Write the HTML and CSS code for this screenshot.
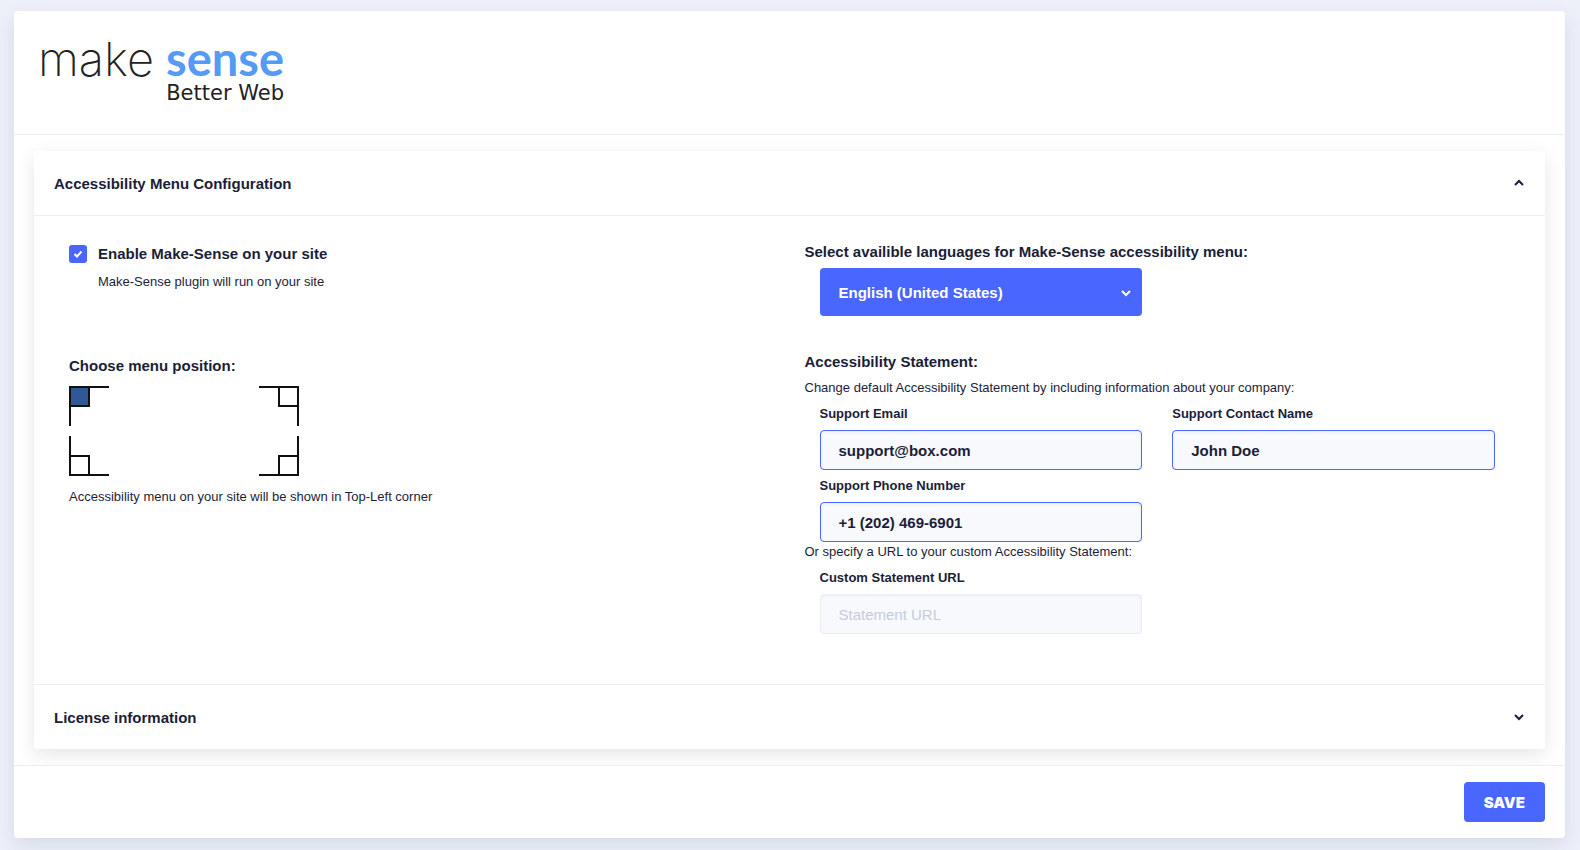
FILE: index.html
```html
<!DOCTYPE html>
<html lang="en">

<head>
  <meta charset="UTF-8">
  <meta name="viewport" content="width=device-width, initial-scale=1.0">
  <title>Make-Sense settings</title>
  <link rel="stylesheet" href="styles.css">
</head>

<body>
  <form class="card">
    <header class="card-header">
      <div class="logo">
        <div class="logo-name"><span class="logo-make">make</span> <span class="logo-sense">sense</span></div>
        <div class="logo-sub">Better Web</div>
      </div>
    </header>

    <main class="card-body">
      <div class="accordion">
        <button type="button" class="accordion-toggle" aria-expanded="true">
          Accessibility Menu Configuration
          <svg class="chevron" viewBox="0 0 12 12"><path d="M2 8l4-4 4 4" /></svg>
        </button>

        <div class="accordion-body">
          <div class="column">
            <section class="enable">
              <input type="checkbox" id="enable" class="checkbox" checked>
              <div>
                <label for="enable" class="title">Enable Make-Sense on your site</label>
                <p class="text">Make-Sense plugin will run on your site</p>
              </div>
            </section>

            <section>
              <h2 class="title">Choose menu position:</h2>
              <div class="positions">
                <input type="radio" name="position" class="corner top left" aria-label="Top-Left" checked>
                <input type="radio" name="position" class="corner top right" aria-label="Top-Right">
                <input type="radio" name="position" class="corner bottom left" aria-label="Bottom-Left">
                <input type="radio" name="position" class="corner bottom right" aria-label="Bottom-Right">
              </div>
              <p class="text">Accessibility menu on your site will be shown in Top-Left corner</p>
            </section>
          </div>

          <div class="column">
            <section class="languages">
              <label for="language" class="title">Select availible languages for Make-Sense accessibility menu:</label>
              <div class="fields">
                <div class="select-wrap">
                  <select id="language" class="select">
                    <option>English (United States)</option>
                  </select>
                  <svg class="chevron" viewBox="0 0 12 12"><path d="M2 4l4 4 4-4" /></svg>
                </div>
              </div>
            </section>

            <section>
              <h2 class="title">Accessibility Statement:</h2>
              <p class="text intro">Change default Accessibility Statement by including information about your company:</p>
              <div class="fields">
                <div class="field">
                  <label for="email">Support Email</label>
                  <input type="text" id="email" value="support@box.com">
                </div>
                <div class="field">
                  <label for="contact">Support Contact Name</label>
                  <input type="text" id="contact" value="John Doe">
                </div>
                <div class="field">
                  <label for="phone">Support Phone Number</label>
                  <input type="text" id="phone" value="+1 (202) 469-6901">
                </div>
              </div>
              <p class="text intro">Or specify a URL to your custom Accessibility Statement:</p>
              <div class="fields">
                <div class="field">
                  <label for="url">Custom Statement URL</label>
                  <input type="text" id="url" placeholder="Statement URL">
                </div>
              </div>
            </section>
          </div>
        </div>

        <button type="button" class="accordion-toggle" aria-expanded="false">
          License information
          <svg class="chevron" viewBox="0 0 12 12"><path d="M2 4l4 4 4-4" /></svg>
        </button>
      </div>
    </main>

    <footer class="card-footer">
      <button type="submit" class="save">SAVE</button>
    </footer>
  </form>
</body>

</html>
```

FILE: styles.css
```css
* {
  box-sizing: border-box;
}

body {
  margin: 0;
  padding: 11px 15px 12px 14px;
  background: #edf0f9;
  color: #1b1e38;
  font-family: "Liberation Sans", Arial, sans-serif;
  font-size: 13px;
  line-height: 20px;
}

h2,
p {
  margin: 0;
}

button,
input,
select {
  font-family: inherit;
  color: inherit;
}

.card {
  background: #fff;
  border-radius: 4px;
  box-shadow: 0 8px 20px rgba(60, 75, 110, 0.12);
}

.card-header {
  padding: 23px 20px 30px;
  border-bottom: 1px solid #ebedf5;
}

/* logo */
.logo {
  width: 250px;
  color: #222;
}

.logo-name {
  display: flex;
  align-items: baseline;
  justify-content: flex-end;
  gap: 12px;
  height: 48px;
  font-size: 47px;
  line-height: 48px;
}

.logo-make {
  font-family: Inter, sans-serif;
  font-weight: 200;
}

.logo-sense {
  color: #559bf5;
  font-family: Lato, sans-serif;
  font-weight: 700;
}

.logo-sub {
  font-family: "DejaVu Sans", sans-serif;
  font-size: 21px;
  line-height: 22px;
  text-align: right;
}

.card-body {
  padding: 16px 20px;
  overflow: hidden;
}

/* accordion */
.accordion {
  border-radius: 4px;
  box-shadow: 0 6px 20px rgba(0, 0, 0, 0.1);
}

.accordion-toggle {
  display: flex;
  align-items: center;
  justify-content: space-between;
  width: 100%;
  height: 64px;
  padding: 0 20px;
  border: 0;
  background: none;
  font-size: 15px;
  font-weight: bold;
  cursor: pointer;
}

.chevron {
  width: 12px;
  height: 12px;
  fill: none;
  stroke: currentColor;
  stroke-width: 2;
}

.accordion-body {
  display: grid;
  grid-template-columns: 1fr 1fr;
  gap: 30px;
  padding: 26px 35px 50px;
  border-top: 1px solid #eeeef4;
  border-bottom: 1px solid #ebedf5;
}

.title {
  display: block;
  font-size: 15px;
  font-weight: bold;
  line-height: 20px;
}

/* left column */
.enable {
  display: flex;
  gap: 11px;
  height: 112px;
}

.enable .title {
  margin-bottom: 8px;
}

.checkbox {
  appearance: none;
  width: 18px;
  height: 18px;
  margin: 1px 0 0;
  border-radius: 3px;
  background: #dfe3f0;
}

.checkbox:checked {
  background: #4966fe url('data:image/svg+xml,<svg xmlns="http://www.w3.org/2000/svg" viewBox="0 0 18 18"><path d="M5.5 9l2.500 2.500 4.500-5" fill="none" stroke="white" stroke-width="2"/></svg>');
}

.column:first-child {
  padding-top: 2px;
}

.positions {
  display: grid;
  grid-template-columns: 40px 40px;
  gap: 10px 150px;
  margin: 10px 0 11px;
}

.corner {
  appearance: none;
  display: flex;
  width: 40px;
  height: 40px;
  margin: 0;
  border: 0 solid #111;
  cursor: pointer;
}

.corner::before {
  content: "";
  width: 17px;
  height: 17px;
  border: 0 solid #111;
}

.corner:checked::before {
  background: #305896;
}

.top {
  border-top-width: 2px;
  align-items: flex-start;
}

.top::before {
  border-bottom-width: 2px;
}

.bottom {
  border-bottom-width: 2px;
  align-items: flex-end;
}

.bottom::before {
  border-top-width: 2px;
}

.left {
  border-left-width: 2px;
}

.left::before {
  border-right-width: 2px;
}

.right {
  border-right-width: 2px;
  justify-content: flex-end;
}

.right::before {
  border-left-width: 2px;
}

/* right column */
.languages {
  height: 110px;
}

.languages .title {
  margin-bottom: 6px;
}

.fields {
  display: grid;
  grid-template-columns: 1fr 1fr;
  column-gap: 30px;
  padding: 0 15px;
}

.intro {
  height: 26px;
}

.title + .intro {
  height: 32px;
  padding-top: 6px;
}

.select-wrap {
  position: relative;
}

.select {
  appearance: none;
  width: 100%;
  height: 48px;
  padding: 0 19px;
  border: 0;
  border-radius: 4px;
  background: #4966fe;
  color: #fff;
  font-size: 15px;
  font-weight: bold;
}

.select-wrap .chevron {
  position: absolute;
  top: 19px;
  right: 10px;
  color: #fff;
  pointer-events: none;
}

.field label {
  display: block;
  height: 26px;
  font-weight: bold;
}

.field:nth-child(n + 3) {
  padding-top: 6px;
}

.field input {
  display: block;
  width: 100%;
  height: 40px;
  padding: 0 18px;
  border: 1px solid #4966fe;
  border-radius: 4px;
  background: #f8f9fd;
  box-shadow: inset 0 1px 3px rgba(40, 50, 90, 0.06);
  font-size: 15px;
  font-weight: bold;
}

.field input:placeholder-shown {
  border-color: #ebedf5;
  font-weight: normal;
}

.field input::placeholder {
  color: #c6cbdf;
}

.card-footer {
  display: flex;
  justify-content: flex-end;
  padding: 16px 20px;
  border-top: 1px solid #ebedf5;
}

.save {
  height: 40px;
  padding: 0 20px;
  border: 0;
  border-radius: 4px;
  background: #4966fe;
  color: #fff;
  font-family: Inter, sans-serif;
  font-size: 15px;
  font-weight: 900;
  cursor: pointer;
}
```
